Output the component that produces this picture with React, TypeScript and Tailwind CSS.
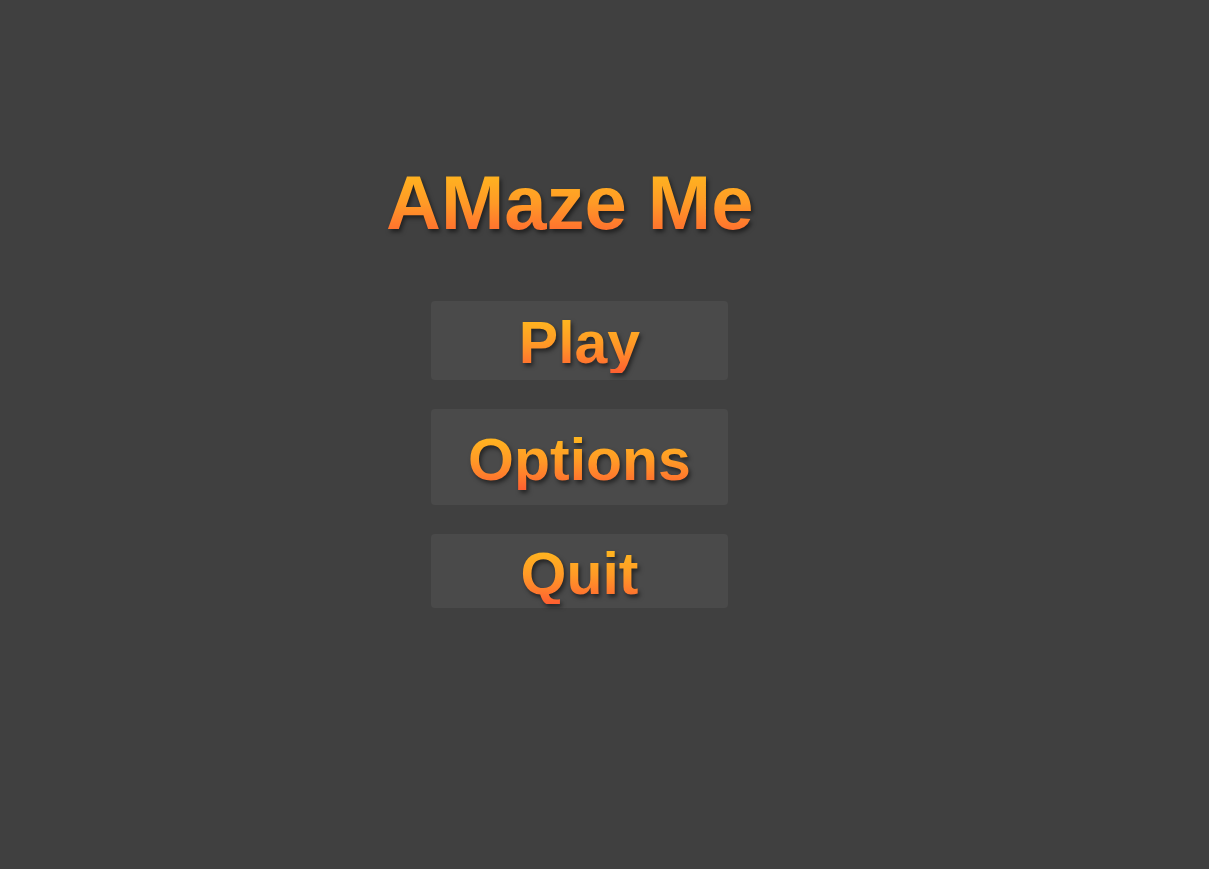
import React from "react";

const txt =
  "bg-gradient-to-b from-[#ffbc1c] via-[#ff9a26] to-[#ff5e30] bg-clip-text text-transparent font-bold drop-shadow-[2px_3px_2px_rgba(0,0,0,0.5)]";

export default function App() {
  return (
    <div
      className="w-full h-[869px] bg-[#404040] overflow-hidden"
      style={{ fontFamily: '"Liberation Sans", Arial, sans-serif' }}
    >
      <div className="flex flex-col items-start pt-[165px] pl-[386px]">
        <h1 className={`${txt} text-[76px] leading-none`}>AMaze Me</h1>
        <div className="ml-[45px] mt-[60px] flex flex-col gap-[29px] w-[297px]">
          <button className="h-[79px] w-full rounded-[4px] bg-[#4a4a4a] pt-[6px] flex items-center justify-center">
            <span className={`${txt} text-[59px] leading-none`}>Play</span>
          </button>
          <button className="h-[96px] w-full rounded-[4px] bg-[#4a4a4a] pt-[6px] flex items-center justify-center">
            <span className={`${txt} text-[59px] leading-none`}>Options</span>
          </button>
          <button className="h-[74px] w-full rounded-[4px] bg-[#4a4a4a] pt-[6px] flex items-center justify-center">
            <span className={`${txt} text-[59px] leading-none`}>Quit</span>
          </button>
        </div>
      </div>
    </div>
  );
}
